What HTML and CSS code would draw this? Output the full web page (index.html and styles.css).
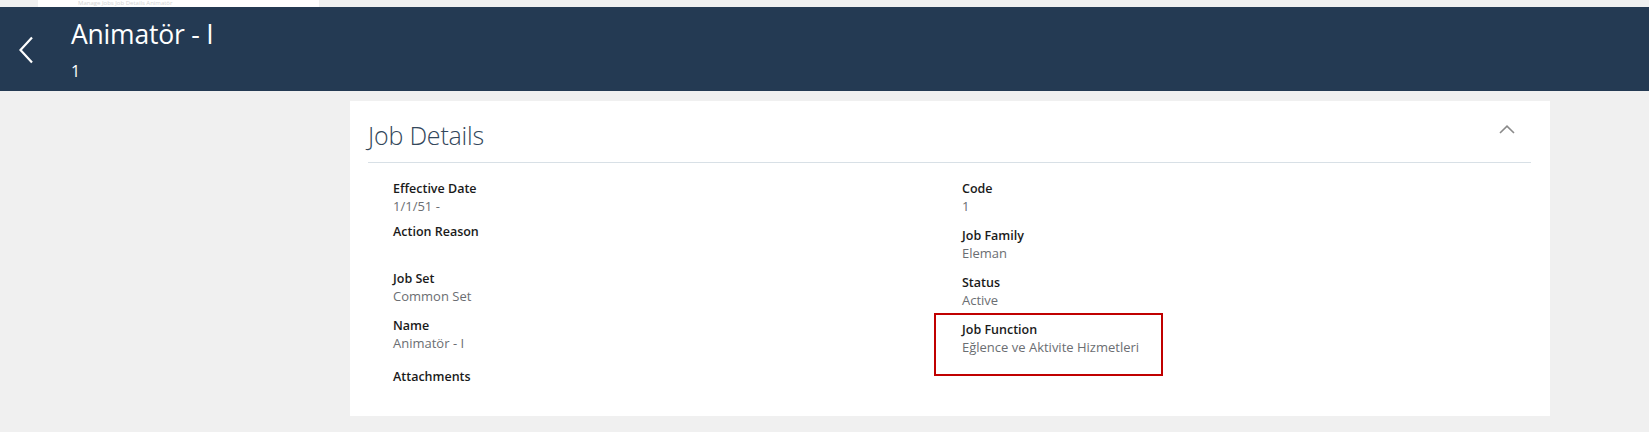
FILE: index.html
```html
<!DOCTYPE html>
<html>
<head>
<meta charset="utf-8">
<link rel="stylesheet" href="styles.css">
</head>
<body>
<div class="topstrip"><div class="tab"><span>Manage Jobs Job Details Animatör</span></div></div>
<header class="hdr">
  <button class="back" aria-label="Back">
    <svg width="16" height="28" viewBox="0 0 16 28"><path d="M14 1.5 L2.5 14 L14 26.5" fill="none" stroke="#fff" stroke-width="2.2"/></svg>
  </button>
  <div class="titles">
    <div class="title">Animatör - I</div>
    <div class="subtitle">1</div>
  </div>
</header>
<main class="main">
  <section class="card">
    <div class="card-head">
      <h2 class="card-title">Job Details</h2>
      <svg class="chev" width="16" height="9" viewBox="0 0 16 9"><path d="M1 8 L8 1.2 L15 8" fill="none" stroke="#8a8a8a" stroke-width="1.6"/></svg>
    </div>
    <div class="fields">
      <div class="col">
        <div class="field f-tight"><div class="lbl">Effective Date</div><div class="val">1/1/51 -</div></div>
        <div class="field"><div class="lbl">Action Reason</div><div class="val"></div></div>
        <div class="field"><div class="lbl">Job Set</div><div class="val">Common Set</div></div>
        <div class="field f-loose"><div class="lbl">Name</div><div class="val">Animatör - I</div></div>
        <div class="field"><div class="lbl">Attachments</div></div>
      </div>
      <div class="col">
        <div class="field"><div class="lbl">Code</div><div class="val">1</div></div>
        <div class="field"><div class="lbl">Job Family</div><div class="val">Eleman</div></div>
        <div class="field"><div class="lbl">Status</div><div class="val">Active</div></div>
        <div class="field marked"><div class="lbl">Job Function</div><div class="val">Eğlence ve Aktivite Hizmetleri</div></div>
      </div>
    </div>
  </section>
</main>
</body>
</html>
```
FILE: styles.css
```css
* { box-sizing: border-box; }
html, body { margin: 0; padding: 0; }
body {
  background: #f0f0f0;
  font-family: "Open Sans", "Noto Sans", sans-serif;
  height: 432px;
  overflow: hidden;
}
.topstrip {
  height: 7px;
  background: #eff0f0;
  padding-left: 38px;
  overflow: hidden;
}
.tab {
  width: 281px;
  height: 7px;
  background: #fff;
  overflow: hidden;
  color: #d4d4d4;
  font-size: 6px;
  line-height: 7px;
  padding-left: 40px;
}
.hdr {
  height: 84px;
  background: #243a53;
  display: flex;
  align-items: flex-start;
  color: #fff;
}
.back {
  background: none;
  border: 0;
  padding: 0;
  margin: 29px 0 0 18px;
  width: 16px;
  height: 28px;
  display: block;
}
.back svg { display: block; }
.titles { margin-left: 37px; padding-top: 8px; }
.title {
  font-size: 26.5px;
  font-weight: 400;
  line-height: 38px;
  letter-spacing: -0.2px;
}
.subtitle {
  font-size: 16px;
  line-height: 22px;
  margin-top: 7px;
}
.main { padding: 10px 0 0 350px; }
.card {
  width: 1200px;
  height: 315px;
  background: #fff;
  padding: 0 19px 0 18px;
}
.card-head {
  display: flex;
  align-items: center;
  justify-content: space-between;
  height: 62px;
  border-bottom: 1px solid #d8e0e6;
  padding-top: 7px;
}
.card-title {
  margin: 0;
  font-size: 25px;
  font-weight: 300;
  color: #33475b;
  letter-spacing: -0.2px;
}
.chev { margin-right: 16px; margin-top: -12px; }
.fields {
  display: grid;
  grid-template-columns: 569px 1fr;
  padding: 17px 0 0 25px;
}
.field { margin-bottom: 12px; position: relative; }
.field.f-tight { margin-bottom: 8px; }
.field.f-loose { margin-bottom: 16px; }
.lbl {
  font-size: 12.5px;
  font-weight: 600;
  color: #1a1a1a;
  line-height: 17px;
}
.val {
  font-size: 13px;
  color: #6b6e72;
  line-height: 18px;
  min-height: 18px;
}
.marked::after {
  content: "";
  position: absolute;
  left: -28px;
  top: -8px;
  width: 225px;
  height: 59px;
  border: 2px solid #c00000;
}
```
